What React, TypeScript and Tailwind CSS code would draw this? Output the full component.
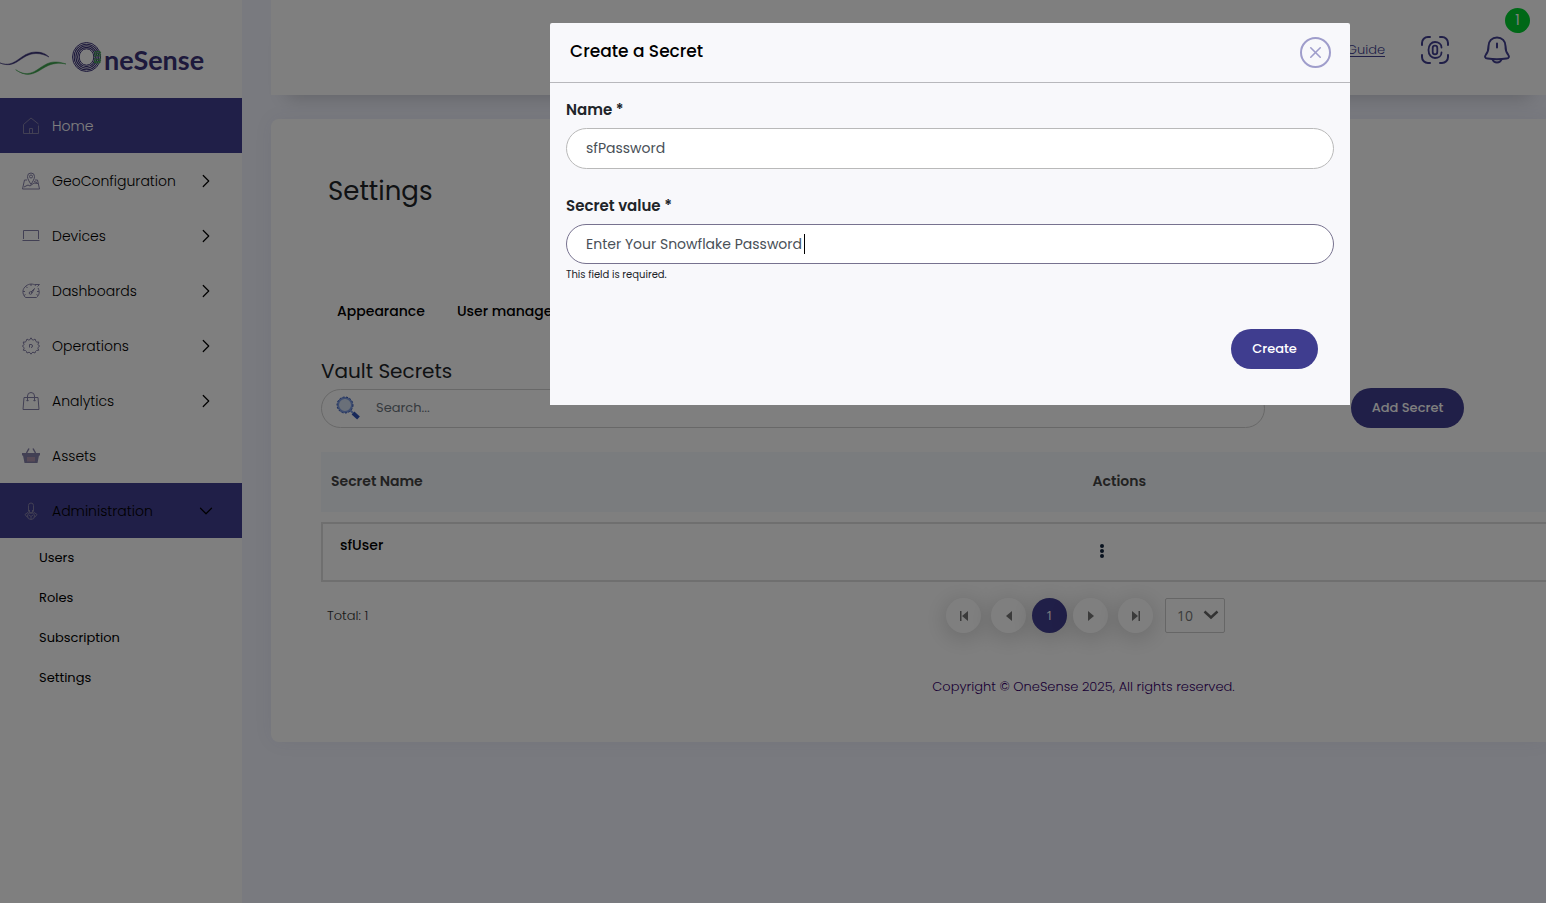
import type { ReactNode } from "react";
import { ChevronDown, ChevronRight, X } from "lucide-react";

const iconProps = {
    width: 18,
    height: 18,
    viewBox: "0 0 18 18",
    fill: "none",
    stroke: "currentColor",
    strokeWidth: 1,
};

const icons: Record<string, ReactNode> = {
    home: (
        <svg {...iconProps}>
            <path d="M1.5 7.5v9h15v-8M1.5 7.5 9 1l7.5 6M7.5 16.5v-5h3v5" />
        </svg>
    ),
    geo: (
        <svg {...iconProps}>
            <path d="M9 12.5C7 9 5.5 7 5.5 4.5a3.5 3.5 0 0 1 7 0C12.5 7 11 9 9 12.5z" />
            <circle cx="9" cy="4.5" r="1.5" />
            <path d="M5 8H2.5L.5 17h17l-2-9H13M2 15l4-2 2 1 4-3 4 .5M12 9.500l3 1" />
        </svg>
    ),
    devices: (
        <svg {...iconProps}>
            <path d="M1.5 12V3.500h15V12M.5 13.500h17" />
        </svg>
    ),
    dashboards: (
        <svg {...iconProps}>
            <path d="M3.500 15.500C-.5 11.500.5 6.500 4 4c3-2.500 7-2.500 10-.5M16 6c2 3.500 1.500 7-1.500 9.500h-11M13 2.500h4.500M15.500 4.500l2-2" />
            <path d="M1 9.500h2M15 9.500h2M9 2v2M4 4.500 5.500 6M2 13.500l1.500-1M16 13.500l-1.500-1" />
            <path d="m9 10 3.500-3.500L10 11" />
            <circle cx="8.500" cy="11" r="1.300" />
        </svg>
    ),
    operations: (
        <svg {...iconProps}>
            <path d="M9 .8 10.500 3q1.200.3 2.500-1l1 2.500q.5 1 2.800.5l-.8 2.500q0 .8 1.700 1.500L16 10.500q-.5 1 .8 2.700l-2.300.3q-1 .3-1.500 2.500l-2-.8q-1 0-2 2-1-2-2-2L5 16q-.5-2.200-1.500-2.500l-2.300-.3q1.300-1.700.8-2.700L.3 9Q2 8.300 2 7.500L1.200 5Q3.500 5.500 4 4.500L5 2q1.300 1.300 2.500 1z" />
            <path d="M7.500 10.500v-3H9a1.500 1.500 0 1 1 0 3" />
        </svg>
    ),
    analytics: (
        <svg {...iconProps}>
            <path d="M2 5.500h14l1 12H1zM5.500 9V4a3.500 3.500 0 0 1 7 0v5M4.500 8l1 1.200 1-1.200M11.500 8l1 1.200 1-1.200" />
        </svg>
    ),
    assets: (
        <svg {...iconProps}>
            <path d="M0 6h18v2.500h-1L15.500 16h-13L1 8.500H0z" fill="currentColor" stroke="none" />
            <path d="m4.500 6 2.500-4.500M13.500 6 11 1.500" strokeWidth="1.500" />
            <path d="M6 10v4.500M8 10v4.500M10 10v4.500M12 10v4.500" stroke="#d8a8b0" />
        </svg>
    ),
    admin: (
        <svg {...iconProps}>
            <path d="M6.500 9.500V3.500a2.500 2.500 0 0 1 5 0v6M7.500 8v2.500l1.500 1 1.500-1V8M6.500 10 3 12.500l2.500 3M11.500 10l3.500 2.500-2.500 3" />
            <circle cx="9" cy="14" r="3.500" />
            <path d="m7 13 2 1.500 2-1.500M9 14.500V17" />
        </svg>
    ),
};

const menu = [
    { label: "Home", icon: "home", row: "bg-[#413e90] text-white", arrow: "" },
    { label: "GeoConfiguration", icon: "geo", row: "text-black", arrow: "right" },
    { label: "Devices", icon: "devices", row: "text-black", arrow: "right" },
    { label: "Dashboards", icon: "dashboards", row: "text-black", arrow: "right" },
    { label: "Operations", icon: "operations", row: "text-black", arrow: "right" },
    { label: "Analytics", icon: "analytics", row: "text-black", arrow: "right" },
    { label: "Assets", icon: "assets", row: "text-black", arrow: "" },
    { label: "Administration", icon: "admin", row: "bg-[#413e90] text-black", arrow: "down" },
];

const subMenu = ["Users", "Roles", "Subscription", "Settings"];

function Logo() {
    return (
        <div className="flex h-[98px] items-end pb-[21px] text-[#3a3278]">
            <svg width="68" height="36" viewBox="0 0 68 36" fill="none" strokeLinecap="round">
                <path d="M0 22C16 28 20 11 36 11c6 0 10 2 13 5-4-2-8-3.500-13-3.500C20 13 17 29 0 22z" fill="#3a3278" stroke="#3a3278" strokeWidth="0.500" />
                <path d="M16 29c18 12 24-9 40-8 4 0 7 1 10 2-3-.5-6-1-10-.5-15 1-22 19-40 6.500z" fill="#3fa34f" stroke="#3fa34f" strokeWidth="0.500" />
            </svg>
            <svg className="mb-1 ml-1" width="30" height="32" viewBox="0 0 30 32" fill="none">
                <ellipse cx="14.500" cy="16" rx="14" ry="14.500" stroke="#3a3278" strokeWidth="1" />
                <ellipse cx="14.500" cy="16" rx="12.300" ry="12.800" stroke="#3a3278" strokeWidth="1.100" />
                <ellipse cx="14.500" cy="16" rx="10.600" ry="11.200" stroke="#3a3278" strokeWidth="1.100" />
                <ellipse cx="14.500" cy="16" rx="8.900" ry="9.600" stroke="#3a3278" strokeWidth="1.100" />
                <ellipse cx="14.500" cy="16" rx="7.300" ry="8.200" stroke="#3a3278" strokeWidth="1" />
                <path d="M22 11.500q3.500-2 7 0M22 13.500q3.500-2 7 0M22 15.500q3.500-2 7 0M22 17.500q3.500 2 7 0M22 19.500q3.500 2 7 0M22 21q3.500 2 6.500 0" stroke="#3fa34f" strokeWidth="1.200" />
            </svg>
            <span className="ml-0.5 pb-px font-['Lato'] text-[27px] leading-8 font-bold">neSense</span>
        </div>
    );
}

function Sidebar() {
    return (
        <aside className="w-[242px] shrink-0 bg-white">
            <Logo />
            <nav>
                {menu.map((item) => (
                    <a key={item.label} href="#" className={`flex h-[55px] items-center pr-[25px] pl-[22px] text-sm font-light ${item.row}`}>
                        <span className="mr-3 text-[#8580a8]">{icons[item.icon]}</span>
                        <span className="flex-1">{item.label}</span>
                        {item.arrow === "right" && <ChevronRight size={22} strokeWidth={1.3} />}
                        {item.arrow === "down" && <ChevronDown size={22} strokeWidth={1.3} />}
                    </a>
                ))}
                {subMenu.map((label) => (
                    <a key={label} href="#" className="flex h-10 items-center pl-[39px] text-[13px] text-black">
                        {label}
                    </a>
                ))}
            </nav>
        </aside>
    );
}

function Header() {
    return (
        <header className="flex h-[95px] items-center justify-end bg-white pt-1 pr-9 text-[#413e90] shadow-[0_18px_18px_-16px_rgba(0,0,0,0.2)]">
            <a href="#" className="text-[13px] font-light underline underline-offset-2">
                User Guide
            </a>
            <button type="button" aria-label="Scan" className="ml-9">
                <svg width="28" height="28" viewBox="0 0 28 28" fill="none" stroke="currentColor" strokeWidth="2" strokeLinecap="round">
                    <path d="M1 9V7a6 6 0 0 1 6-6h2M19 1h2a6 6 0 0 1 6 6v2M27 19v2a6 6 0 0 1-6 6h-2M9 27H7a6 6 0 0 1-6-6v-2" />
                    <path d="M20.500 11.500C20.500 8 17.500 6 14 6s-6.500 3-6.500 8 3 8 6.500 8 6.500-2 6.500-5.500" strokeWidth="1.800" />
                    <rect x="11.700" y="9.700" width="4.600" height="8.600" rx="2.300" strokeWidth="1.800" />
                </svg>
            </button>
            <button type="button" aria-label="Notifications" className="relative ml-[35px]">
                <svg width="26" height="28" viewBox="0 0 26 28" fill="none" stroke="currentColor" strokeWidth="2" strokeLinejoin="round" strokeLinecap="round">
                    <path d="M13 1.500c-5 0-8.500 3.500-8.500 8.500 0 4-.8 6.500-2.500 8.500-1.600 2-1 4 1.500 4 6 1 13 1 19 0 2.500 0 3.100-2 1.500-4-1.700-2-2.500-4.500-2.500-8.500 0-5-3.500-8.500-8.500-8.500z" />
                    <path d="M8.500 23.500c1.500 4 7.500 4 9 0M13 7.500v4" />
                </svg>
                <span className="absolute -top-7 -right-5 flex size-[25px] items-center justify-center rounded-full bg-[#00d02f] text-sm text-white">
                    1
                </span>
            </button>
        </header>
    );
}

function PageButton({ label, active, children }: { label: string; active?: boolean; children: ReactNode }) {
    return (
        <button
            type="button"
            aria-label={label}
            className={`flex size-[35px] items-center justify-center rounded-full font-['Open_Sans'] text-[13px] shadow-[0_4px_24px_rgba(0,0,0,0.2)] ${
                active ? "bg-[#413e90] text-white" : "bg-white text-[#777]"
            }`}
        >
            {children}
        </button>
    );
}

function Pager() {
    return (
        <div className="mt-1.5 flex items-center justify-between pr-[321px] pl-1.5">
            <span className="text-[13px] font-light text-[#333]">Total: 1</span>
            <div className="flex items-center">
                <div className="flex gap-2.5">
                    <PageButton label="First page">
                        <svg width="10" height="12" viewBox="0 0 10 12" fill="currentColor"><path d="M1 1h1.500v10H1zM9 1v10L3 6z" /></svg>
                    </PageButton>
                    <PageButton label="Previous page">
                        <svg width="10" height="12" viewBox="0 0 10 12" fill="currentColor"><path d="M8 1v10L2 6z" /></svg>
                    </PageButton>
                </div>
                <div className="mx-1.5">
                    <PageButton label="Page 1" active>1</PageButton>
                </div>
                <div className="flex gap-2.5">
                    <PageButton label="Next page">
                        <svg width="10" height="12" viewBox="0 0 10 12" fill="currentColor"><path d="M2 1v10l6-5z" /></svg>
                    </PageButton>
                    <PageButton label="Last page">
                        <svg width="10" height="12" viewBox="0 0 10 12" fill="currentColor"><path d="M1 1v10l6-5zM7.500 1H9v10H7.500z" /></svg>
                    </PageButton>
                </div>
                <div className="relative ml-3">
                    <select aria-label="Rows per page" className="h-[35px] w-[60px] appearance-none rounded-xs border border-[#ccc] bg-white pl-[11px] font-['Open_Sans'] text-sm text-[#777]">
                        <option>10</option>
                    </select>
                    <svg className="pointer-events-none absolute top-3 right-1.5 text-[#666]" width="16" height="10" viewBox="0 0 16 10" fill="none" stroke="currentColor" strokeWidth="2.500">
                        <path d="m1.500 1.500 6.500 6 6.500-6" />
                    </svg>
                </div>
            </div>
        </div>
    );
}

function SettingsCard() {
    return (
        <main className="mt-6 rounded-l-lg bg-white pt-[52px] pb-[43px] pl-[50px] shadow-[0_0_20px_rgba(65,62,144,0.06)]">
            <h1 className="pl-[7px] text-[26px] leading-10 text-[#212529]">Settings</h1>

            {/* tabs */}
            <div className="mt-[88px] flex gap-8 pl-4 text-sm leading-6 font-medium text-black">
                <button type="button">Appearance</button>
                <button type="button">User management</button>
            </div>

            <h2 className="mt-8 text-[20px] leading-8 text-[#212529]">Vault Secrets</h2>
            <div className="mt-px flex items-center pr-[82px]">
                <div className="flex h-[39px] flex-1 items-center rounded-full border border-[#d0d0d0] pl-3.5">
                    <svg width="24" height="24" viewBox="0 0 24 24" fill="none">
                        <circle cx="9" cy="9" r="7" fill="#d5e0f2" stroke="#7c9be0" strokeWidth="2" />
                        <circle cx="9" cy="9" r="8" stroke="#3053b5" strokeWidth="1" strokeDasharray="2 1.500" />
                        <path d="m14 14 3 3" stroke="#7c9be0" strokeWidth="2" />
                        <path d="m17 17 5.500 5" stroke="#3053b5" strokeWidth="4" />
                    </svg>
                    <input type="search" aria-label="Search" placeholder="Search..." className="ml-4 flex-1 text-[13px] outline-none placeholder:text-[#6c757d]" />
                </div>
                <button type="button" className="ml-[86px] h-10 w-[113px] rounded-full bg-[#413e90] text-[13px] font-medium text-white">
                    Add Secret
                </button>
            </div>

            <table className="mt-3.5 w-full border-separate border-spacing-x-0 border-spacing-y-2.5 text-left">
                <thead>
                    <tr className="h-[60px] bg-[#f5f8fc] text-sm text-[#444]">
                        <th className="w-[62%] pb-0.5 pl-2.5 font-semibold">Secret Name</th>
                        <th className="pb-0.5 pl-3 font-semibold">Actions</th>
                    </tr>
                </thead>
                <tbody>
                    <tr className="h-[60px]">
                        <td className="border-y-2 border-l-2 border-[#dfdfdf] pb-3.5 pl-[17px] text-sm font-medium text-black">sfUser</td>
                        <td className="border-y-2 border-[#dfdfdf] pb-0.5 pl-[18px] text-[#12263f]">
                            <button type="button" aria-label="Row actions" className="block">
                                <svg width="6" height="14" viewBox="0 0 6 14" fill="currentColor">
                                    <circle cx="3" cy="2" r="2" />
                                    <circle cx="3" cy="7" r="2" />
                                    <circle cx="3" cy="12" r="2" />
                                </svg>
                            </button>
                        </td>
                    </tr>
                </tbody>
            </table>

            <Pager />
            <p className="mt-[42px] pl-[300px] text-center text-[13px] leading-6 font-light text-[#36006a]">
                Copyright © OneSense 2025, All rights reserved.
            </p>
        </main>
    );
}

function CreateSecretModal() {
    return (
        <div className="fixed inset-0 flex items-start justify-end bg-black/50 pt-[23px] pr-[196px]">
            <div role="dialog" aria-labelledby="modal-title" className="w-[800px] rounded-t-xs bg-[#f8f8fb]">
                <div className="flex h-[60px] items-center justify-between border-b border-[#b8b8bc] pr-[19px] pl-5">
                    <h3 id="modal-title" className="pb-0.5 text-[17px] font-medium text-black">Create a Secret</h3>
                    <button type="button" aria-label="Close" className="flex size-[31px] items-center justify-center rounded-full border-2 border-[#9f9dcb] text-[#9f9dcb]">
                        <X size={19} strokeWidth={2} />
                    </button>
                </div>
                <form className="px-4 pt-[15px] pb-9">
                    <label htmlFor="secret-name" className="block text-[15px] leading-6 font-semibold text-[#212529]">
                        Name *
                    </label>
                    <input
                        id="secret-name"
                        defaultValue="sfPassword"
                        className="mt-1.5 block h-[41px] w-full rounded-full border border-[#b9b9b9] bg-white px-[19px] text-sm text-[#495057] outline-none"
                    />
                    <label htmlFor="secret-value" className="mt-[25px] block text-[15px] leading-6 font-semibold text-[#212529]">
                        Secret value *
                    </label>
                    <div className="relative mt-1.5">
                        <input
                            id="secret-value"
                            defaultValue="Enter Your Snowflake Password"
                            className="block h-10 w-full rounded-full border border-[#77728f] bg-white px-[19px] text-sm text-[#495057] outline-none"
                        />
                        <span className="absolute top-2.5 left-[238px] h-5 w-px bg-black" />
                    </div>
                    <p className="mt-[3px] text-[10px] leading-4 text-[#212529]">This field is required.</p>
                    <div className="mt-[46px] flex justify-end pr-4">
                        <button type="button" className="h-10 w-[87px] rounded-full bg-[#3f3d8f] text-[13px] font-medium text-white">
                            Create
                        </button>
                    </div>
                </form>
            </div>
        </div>
    );
}

export default function App() {
    return (
        <div className="flex min-h-screen overflow-hidden bg-[#f2f4fe] font-['Poppins','Inter',sans-serif]">
            <Sidebar />
            <div className="min-w-0 flex-1 pl-[29px]">
                <Header />
                <SettingsCard />
            </div>
            <CreateSecretModal />
        </div>
    );
}
